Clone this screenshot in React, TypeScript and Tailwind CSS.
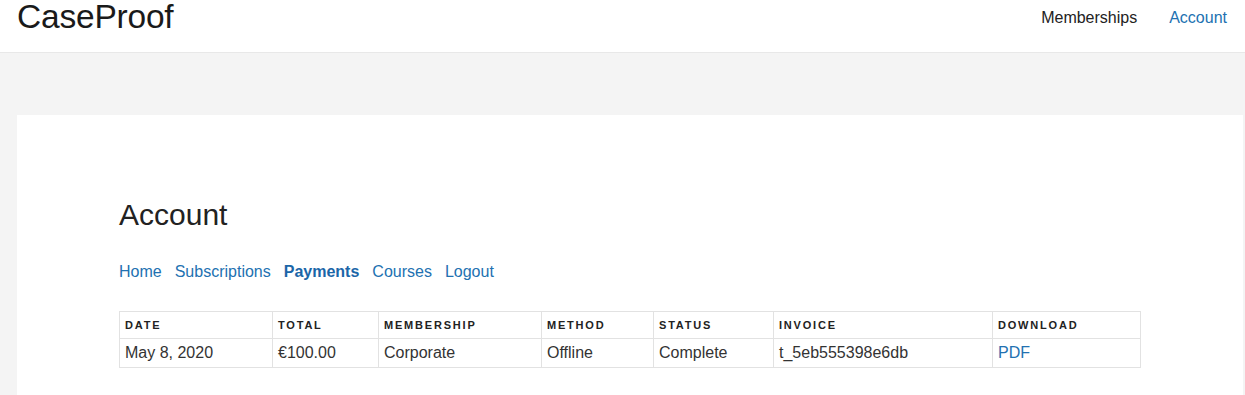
const columns = [
  { label: 'Date', w: 'w-[153px]' },
  { label: 'Total', w: 'w-[106px]' },
  { label: 'Membership', w: 'w-[163px]' },
  { label: 'Method', w: 'w-[112px]' },
  { label: 'Status', w: 'w-[120px]' },
  { label: 'Invoice', w: 'w-[219px]' },
  { label: 'Download', w: 'w-[148px]' },
];

const payments = [
  {
    date: 'May 8, 2020',
    total: '€100.00',
    membership: 'Corporate',
    method: 'Offline',
    status: 'Complete',
    invoice: 't_5eb555398e6db',
  },
];

const accountLinks = ['Home', 'Subscriptions', 'Payments', 'Courses', 'Logout'];

const App = () => {
  return (
    <div className="min-h-[395px] bg-[#f4f4f4] font-['Liberation_Sans',Arial,sans-serif] text-[#222]">
      <header className="h-[53px] bg-white border-b border-[#e8e8e8] flex items-start justify-between pl-[17px] pr-[18px]">
        <div className="text-[33.5px] leading-none pt-[0px] tracking-[-0.2px] text-[#1a1a1a]">CaseProof</div>
        <nav className="flex gap-[32px] text-[16px] pt-[6px]">
          <a className="text-[#222]">Memberships</a>
          <a className="text-[#2271b1]">Account</a>
        </nav>
      </header>

      <main className="pt-[62px] pl-[17px] pr-[2px]">
        <div className="bg-white pt-[85px] pl-[102px] pb-[30px]">
          <h1 className="text-[30px] leading-none text-[#222]">Account</h1>

          <div className="flex gap-[13px] mt-[30px] text-[16px] text-[#2271b1]">
            {accountLinks.map((link) => (
              <a key={link} className={link === 'Payments' ? 'font-bold text-[#1b66a8]' : ''}>
                {link}
              </a>
            ))}
          </div>

          <table className="mt-[27px] border-collapse border border-[#e2e2e2] table-fixed w-[1020px]">
            <thead>
              <tr className="h-[27px]">
                {columns.map((col) => (
                  <th
                    key={col.label}
                    className={`${col.w} border border-[#e2e2e2] text-left font-bold uppercase text-[11px] tracking-[1.8px] pl-[5px] text-[#222]`}
                  >
                    {col.label}
                  </th>
                ))}
              </tr>
            </thead>
            <tbody>
              {payments.map((p) => (
                <tr key={p.invoice} className="h-[29px] text-[16px] text-[#333]">
                  <td className="border border-[#e2e2e2] pl-[5px]">{p.date}</td>
                  <td className="border border-[#e2e2e2] pl-[5px]">{p.total}</td>
                  <td className="border border-[#e2e2e2] pl-[5px]">{p.membership}</td>
                  <td className="border border-[#e2e2e2] pl-[5px]">{p.method}</td>
                  <td className="border border-[#e2e2e2] pl-[5px]">{p.status}</td>
                  <td className="border border-[#e2e2e2] pl-[5px]">{p.invoice}</td>
                  <td className="border border-[#e2e2e2] pl-[5px]">
                    <a className="text-[#2271b1]">PDF</a>
                  </td>
                </tr>
              ))}
            </tbody>
          </table>
        </div>
      </main>
    </div>
  );
};

export default App;
